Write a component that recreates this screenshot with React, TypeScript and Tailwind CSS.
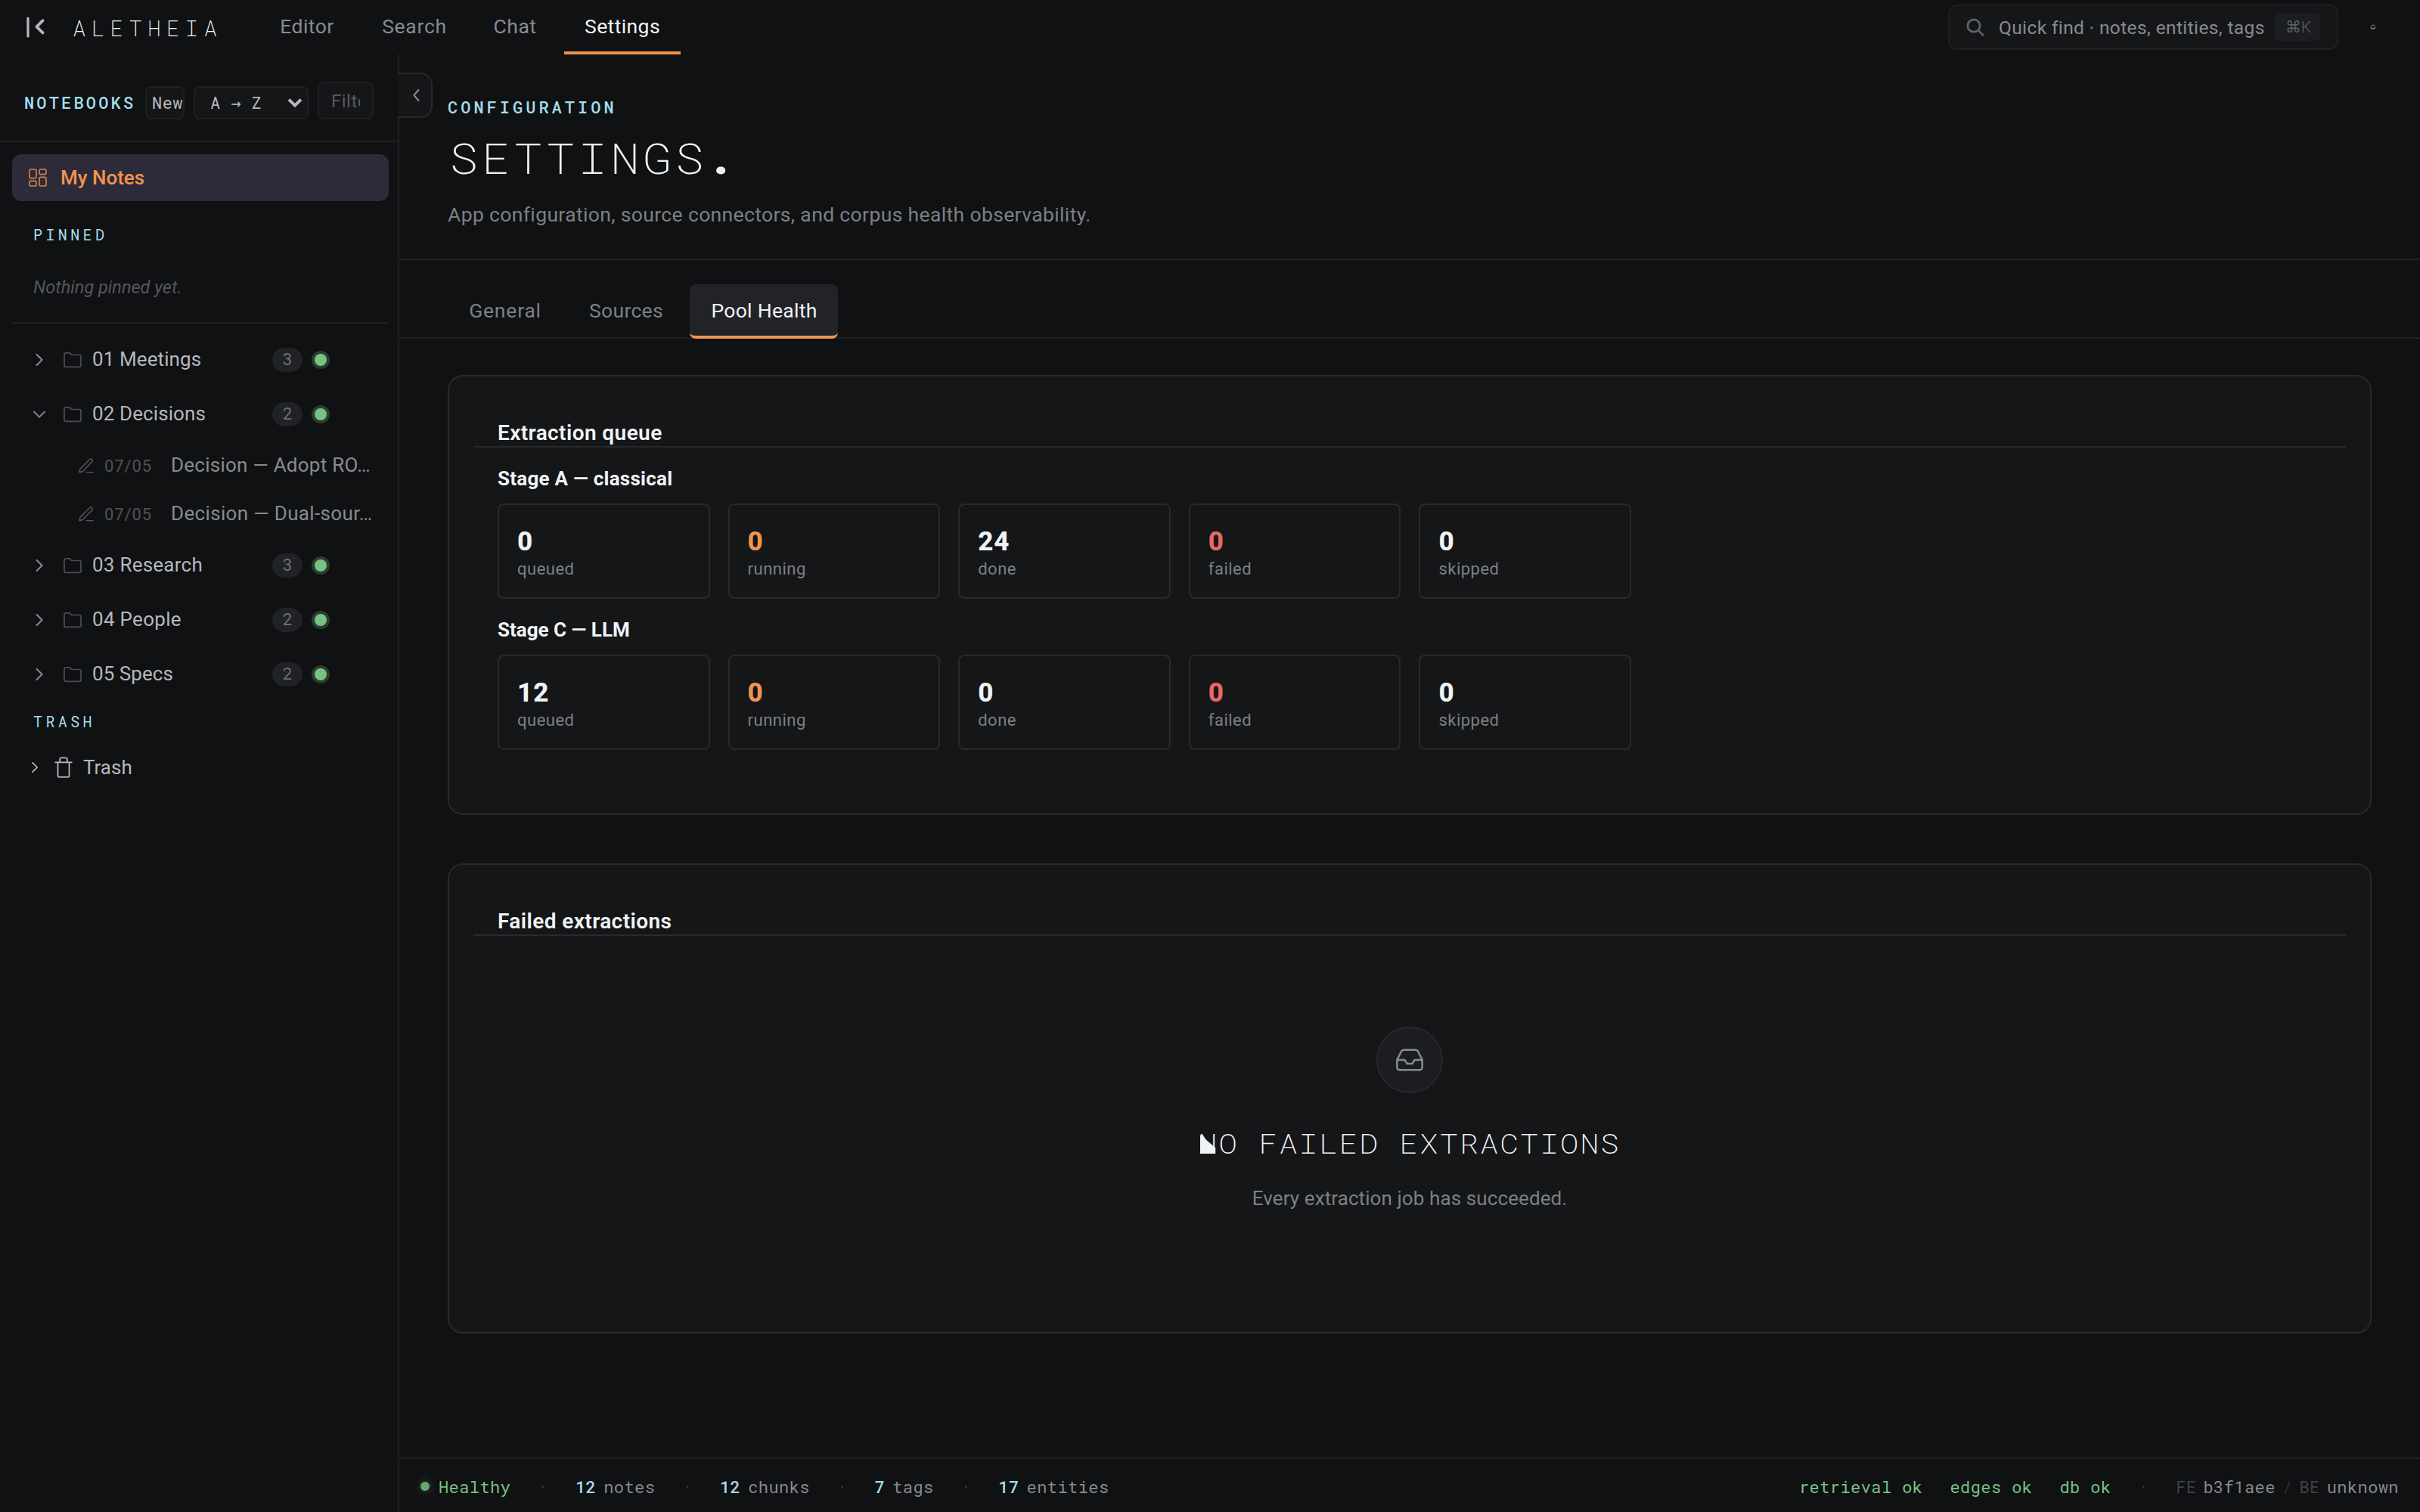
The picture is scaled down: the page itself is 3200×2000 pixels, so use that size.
import React from 'react';

const MONO = "font-['Roboto_Mono','Liberation_Mono',monospace]";

function ChevronRight({ className = '' }: { className?: string }) {
  return (
    <svg viewBox="0 0 16 16" fill="none" stroke="currentColor" strokeWidth="2" strokeLinecap="round" strokeLinejoin="round" className={className}>
      <path d="M4.6 1l7 7-7 7" />
    </svg>
  );
}

function ChevronDown({ className = '' }: { className?: string }) {
  return (
    <svg viewBox="0 0 16 16" fill="none" stroke="currentColor" strokeWidth="2" strokeLinecap="round" strokeLinejoin="round" className={className}>
      <path d="M1 4.6l7 7 7-7" />
    </svg>
  );
}

function FolderIcon() {
  return (
    <svg viewBox="0 0 24 22" fill="none" stroke="currentColor" strokeWidth="1.7" strokeLinejoin="round" className="h-[22px] w-6 shrink-0">
      <path d="M1 3.8C1 2.4 1.8 1.9 3 1.9h5.2l2.2 2.6H21c1.2 0 2 .6 2 1.9v12c0 1.2-.8 1.9-2 1.9H3c-1.2 0-2-.7-2-1.9z" />
    </svg>
  );
}

function PencilIcon() {
  return (
    <svg viewBox="0 0 20 20" fill="none" stroke="currentColor" strokeWidth="1.6" strokeLinecap="round" strokeLinejoin="round" className="h-5 w-5 shrink-0">
      <path d="M1 18.6l.9-4.2L14.6 1.7a2 2 0 0 1 2.9 0l.2.2a2 2 0 0 1 0 2.9L5.2 17.6z" />
      <path d="M10.5 18.8H19" />
    </svg>
  );
}

function TopBar() {
  return (
    <header className="flex h-[72px] shrink-0 items-start">
      <div className="flex h-[72px] w-[344px] items-center">
        <svg viewBox="0 0 32 32" fill="none" stroke="#b4b8be" strokeLinecap="round" strokeLinejoin="round" className="ml-8 h-8 w-8">
          <path strokeWidth="3.2" d="M5 4v24" />
          <path strokeWidth="3.8" d="M24.6 7.2l-8.2 8.1 8.2 8.1" />
        </svg>
        <span className={`${MONO} ml-8 pt-1 text-[29px] font-[200] tracking-[7.4px] text-[#f0f3f6]`}>ALETHEIA</span>
      </div>
      <nav className="flex text-[26.5px] text-[#868b92]">
        <a className="h-[72px] w-[124px] border-b-4 border-transparent text-center leading-[69px] tracking-[0.5px]">Editor</a>
        <a className="ml-3 h-[72px] w-[136px] border-b-4 border-transparent text-center leading-[69px] tracking-[0.7px]">Search</a>
        <a className="ml-3 h-[72px] w-[106px] border-b-4 border-transparent text-center leading-[69px] tracking-[0.5px]">Chat</a>
        <a className="ml-3 h-[72px] w-[154px] border-b-4 border-[#f0954f] text-center leading-[69px] tracking-[0.4px] text-[#f0f3f6]">Settings</a>
      </nav>
      <div className="ml-auto mr-[108px] mt-[6px] flex h-[60px] w-[516px] items-center rounded-xl border-2 border-[#1e2023] bg-[#151618]">
        <svg viewBox="0 0 24 24" fill="none" stroke="#5d6269" strokeWidth="2.8" strokeLinecap="round" className="ml-[22px] h-6 w-6">
          <circle cx="10" cy="10" r="8.2" />
          <path d="M16.4 16.6l5.6 5.8" />
        </svg>
        <span className="ml-[19px] w-[354px] whitespace-nowrap pt-[3px] text-[24.5px] tracking-[0.38px] text-[#868b92]">Quick find · notes, entities, tags</span>
        <kbd className="ml-[11px] h-9 w-[60px] rounded-md bg-[#1b1d21] pl-[2px] text-center font-['Roboto'] text-[21px] font-light leading-[37px] text-[#5b6067]">⌘K</kbd>
      </div>
      <div className="-ml-[66px] mr-[58px] mt-8 h-2 w-2">
        <svg viewBox="0 0 8 8" fill="none" stroke="#7b8087" strokeWidth="1" className="h-2 w-2">
          <path d="M1.3 5.4V3.6a2.6 2.6 0 0 1 5.2 0v1.8zM.8 5.5h6.3M3 6.8h1.8" />
        </svg>
      </div>
    </header>
  );
}

function FolderRow({ name, count, open, tracking }: { name: string; count: number; open?: boolean; tracking: string }) {
  return (
    <div className="flex h-[72px] items-center pl-7">
      {open ? <ChevronDown className="h-4 w-4 text-[#868b92]" /> : <ChevronRight className="h-4 w-4 text-[#868b92]" />}
      <span className="ml-6 flex text-[#4a4e54]"><FolderIcon /></span>
      <span className={`ml-[14px] w-[238px] pb-[2px] text-[26px] text-[#b4b8be] ${tracking}`}>{name}</span>
      <span className="h-8 w-10 rounded-full bg-[#202226] text-center text-[22px] leading-8 text-[#6d7178]">{count}</span>
      <span className="ml-4 h-4 w-4 rounded-full bg-[#78c283] shadow-[0_0_0_4px_rgba(120,194,131,0.25)]" />
    </div>
  );
}

function NoteRow({ title, tracking }: { title: string; tracking: string }) {
  return (
    <div className="flex h-16 items-center pl-[88px]">
      <span className="flex text-[#4f5359]"><PencilIcon /></span>
      <span className="ml-[14px] w-[88px] pt-[1px] text-[22px] tracking-[0.9px] text-[#4f5359]">07/05</span>
      <span className={`whitespace-nowrap pb-[2px] text-[26px] text-[#868b92] ${tracking}`}>{title}</span>
    </div>
  );
}

function Sidebar() {
  return (
    <aside className="flex w-[528px] shrink-0 flex-col border-r-2 border-[#1e2023]">
      <div className="flex h-[116px] items-end border-b-2 border-[#1e2023] pb-7 pl-8">
        <h2 className={`${MONO} w-[160px] whitespace-nowrap text-[22px] font-medium leading-[44px] tracking-[3.16px] text-[#a5dcea]`}>NOTEBOOKS</h2>
        <button className={`${MONO} h-11 w-[52px] overflow-hidden rounded-lg border-2 border-[#1e2023] bg-[#151618] pl-[7px] text-left text-[22px] leading-10 tracking-[0.44px] text-[#b4b8be]`}>New</button>
        <div className={`${MONO} ml-3 flex h-11 w-[152px] items-center justify-between rounded-lg border-2 border-[#1e2023] bg-[#151618] pl-5 pr-[6px] text-[22px] leading-10 tracking-[0.44px] text-[#b4b8be]`}>
          <span className="whitespace-pre">A <span className="font-['DejaVu_Sans_Mono']">→</span> Z</span>
          <svg viewBox="0 0 20 14" fill="none" stroke="currentColor" strokeWidth="4" className="h-[14px] w-5">
            <path d="M2 2.6l8 7.8 8-7.8" />
          </svg>
        </div>
        <div className="ml-3 flex h-[50px] w-[74px] items-center rounded-lg border-2 border-[#1e2023] bg-[#151618] px-4 text-[24px] text-[#55595f]">
          <span className="w-[38px] overflow-hidden whitespace-nowrap pt-[1px] tracking-[0.5px]">Filter</span>
        </div>
      </div>

      <div className="flex flex-col pl-4 pr-3 pt-4">
        <div className="flex h-[62px] items-center rounded-xl bg-[#2d2a3a] pl-[22px] text-[#f0954f]">
          <svg viewBox="0 0 24 24" fill="none" stroke="currentColor" strokeWidth="1.6" className="h-6 w-6 opacity-85">
            <rect x="1" y="1" width="9" height="11.6" rx="1.8" />
            <rect x="14" y="1" width="9" height="6.6" rx="1.8" />
            <rect x="1" y="16.4" width="9" height="6.6" rx="1.8" />
            <rect x="14" y="11.4" width="9" height="11.6" rx="1.8" />
          </svg>
          <span className="ml-[18px] text-[26px] font-medium">My Notes</span>
        </div>
        <h3 className={`${MONO} h-[90px] pl-7 text-[20px] leading-[89px] tracking-[4.4px] text-[#a5dcea]`}>PINNED</h3>
        <p className="h-12 pl-7 text-[23.5px] italic leading-[48px] text-[#53575d]">Nothing pinned yet.</p>
        <div className="mb-3 mt-[22px] h-[2px] bg-[#1e2023]" />
        <FolderRow name="01 Meetings" count={3} tracking="tracking-[0.1px]" />
        <FolderRow name="02 Decisions" count={2} open tracking="tracking-[0.1px]" />
        <NoteRow title="Decision — Adopt RO…" tracking="tracking-[0.25px]" />
        <NoteRow title="Decision — Dual-sour…" tracking="tracking-[0.35px]" />
        <FolderRow name="03 Research" count={3} tracking="tracking-[0.24px]" />
        <FolderRow name="04 People" count={2} tracking="tracking-[0.3px]" />
        <FolderRow name="05 Specs" count={2} tracking="tracking-[0.06px]" />
        <h3 className={`${MONO} h-[54px] pl-7 text-[20px] leading-[53px] tracking-[4.4px] text-[#a5dcea]`}>TRASH</h3>
        <div className="flex h-[66px] items-center pl-[23px] text-[#b4b8be]">
          <ChevronRight className="h-[14px] w-[14px]" />
          <svg viewBox="0 0 24 28" fill="none" stroke="currentColor" strokeWidth="1.8" strokeLinecap="round" strokeLinejoin="round" className="ml-[19px] h-7 w-6">
            <path d="M1.2 7.4h21.6M4.5 7.4V25c0 1.2.7 1.9 1.9 1.9h11.2c1.2 0 1.9-.7 1.9-1.9V7.4M7.2 7V3.2c0-1.2.7-1.9 1.9-1.9h5.8c1.2 0 1.9.7 1.9 1.9V7" />
          </svg>
          <span className="ml-[14px] text-[26px]">Trash</span>
        </div>
      </div>
    </aside>
  );
}

type Stat = { value: number; label: string; color: string };

function StatGrid({ stats }: { stats: Stat[] }) {
  return (
    <div className="grid w-[1499px] grid-cols-5 gap-6">
      {stats.map((s) => (
        <div key={s.label} className="h-[126px] rounded-lg border-2 border-[#27292c] pl-6">
          <div className={`mt-[27px] text-[35px] font-[800] leading-[44px] tracking-[1px] ${s.color}`}>{s.value}</div>
          <div className="text-[22px] leading-[28px] tracking-[0.5px] text-[#7b8087]">{s.label}</div>
        </div>
      ))}
    </div>
  );
}

const WHITE = 'text-[#f0f3f6]';

const STAGE_A: Stat[] = [
  { value: 0, label: 'queued', color: WHITE },
  { value: 0, label: 'running', color: 'text-[#f0954f]' },
  { value: 24, label: 'done', color: WHITE },
  { value: 0, label: 'failed', color: 'text-[#e66a65]' },
  { value: 0, label: 'skipped', color: WHITE },
];

const STAGE_C: Stat[] = [
  { value: 12, label: 'queued', color: WHITE },
  { value: 0, label: 'running', color: 'text-[#f0954f]' },
  { value: 0, label: 'done', color: WHITE },
  { value: 0, label: 'failed', color: 'text-[#e66a65]' },
  { value: 0, label: 'skipped', color: WHITE },
];

function CardTitle({ children }: { children: React.ReactNode }) {
  return (
    <h2 className="mx-8 mt-[52px] h-[42px] border-b-2 border-[#27292c] pl-8 text-[28px] font-semibold leading-[46px] tracking-[0.42px] text-[#f0f3f6]">
      {children}
    </h2>
  );
}

function Main() {
  return (
    <main className="flex min-w-0 flex-1 flex-col">
      <div className="flex h-[272px] border-b-2 border-[#1e2023]">
        <button className="-ml-[2px] mt-6 flex h-[60px] w-[46px] items-center rounded-r-2xl border-2 border-l-0 border-[#27292c] bg-[#151618] pl-[17px] text-[#868b92]">
          <svg viewBox="0 0 16 16" fill="none" stroke="currentColor" strokeWidth="2" strokeLinecap="round" strokeLinejoin="round" className="h-4 w-4">
            <path d="M10.4 1l-6 7 6 7" />
          </svg>
        </button>
        <div className="pl-5">
          <p className={`${MONO} mt-[56px] text-[22px] font-medium leading-[28px] tracking-[4px] text-[#a5dcea]`}>CONFIGURATION</p>
          <h1 className={`${MONO} ml-[2px] mt-[16px] w-fit origin-left scale-x-[1.14] text-[56px] font-[200] leading-[72px] tracking-[3.8px] text-[#f0f3f6]`}>
            SETTINGS<span className="-ml-[1px] font-bold">.</span>
          </h1>
          <p className="mt-[22px] whitespace-nowrap text-[26.5px] leading-[36px] tracking-[0.36px] text-[#7b8087]">
            App configuration, source connectors, and corpus health observability.
          </p>
        </div>
      </div>

      <div className="flex h-[104px] items-end gap-2 border-b-2 border-[#1e2023] pl-16 text-[26.5px] text-[#7b8087]">
        <a className="-mb-[2px] h-[72px] w-[152px] border-b-4 border-transparent text-center leading-[69px] tracking-[0.8px]">General</a>
        <a className="-mb-[2px] h-[72px] w-[152px] border-b-4 border-transparent text-center leading-[69px] tracking-[0.3px]">Sources</a>
        <a className="-mb-[2px] h-[72px] w-[196px] rounded-lg border-b-4 border-[#f0954f] bg-[#212327] pl-[1px] text-center leading-[69px] tracking-[0.3px] text-[#f0f3f6]">Pool Health</a>
      </div>

      <div className="flex min-h-0 flex-1 flex-col gap-16 pl-16 pr-16 pt-12">
        <section className="h-[582px] shrink-0 rounded-[20px] border-2 border-[#27292c] bg-[#151618]">
          <CardTitle>Extraction queue</CardTitle>
          <div className="pl-16">
            <h3 className="mt-[21px] text-[26px] font-bold leading-[40px] tracking-[0.25px] text-[#f0f3f6]">Stage A — classical</h3>
            <div className="mt-[13px]"><StatGrid stats={STAGE_A} /></div>
            <h3 className="mt-[21px] text-[26px] font-bold leading-[40px] text-[#f0f3f6]">Stage C — LLM</h3>
            <div className="mt-[13px]"><StatGrid stats={STAGE_C} /></div>
          </div>
        </section>

        <section className="h-[622px] shrink-0 rounded-[20px] border-2 border-[#27292c] bg-[#151618]">
          <CardTitle>Failed extractions</CardTitle>
          <div className="mt-[120px] flex flex-col items-center">
            <div className="flex h-[88px] w-[88px] items-center justify-center rounded-full border-2 border-[#27292c] bg-[#1b1d21]">
              <svg viewBox="0 0 24 24" fill="none" stroke="#868b92" strokeWidth="1.5" strokeLinecap="round" strokeLinejoin="round" className="h-10 w-10">
                <path d="M22 12h-6l-2 3h-4l-2-3H2" />
                <path d="M5.45 5.11 2 12v6a2 2 0 0 0 2 2h16a2 2 0 0 0 2-2v-6l-3.45-6.89A2 2 0 0 0 16.76 4H7.24a2 2 0 0 0-1.79 1.11z" />
              </svg>
            </div>
            <div className="relative mt-[42px] scale-x-[1.15]">
              <h2 className={`${MONO} whitespace-nowrap text-[36px] font-[200] leading-[48px] tracking-[1.5px] text-[#f0f3f6]`}>NO FAILED EXTRACTIONS</h2>
              {/* solid wedge under the diagonal of the first letter */}
              <span className="absolute left-[2px] top-[13px] h-[25px] w-[18px] bg-[#f0f3f6] [clip-path:polygon(0_0,100%_70%,100%_100%,0_100%)]" />
            </div>
            <p className="mt-[31px] text-[26px] leading-[36px] tracking-[0.1px] text-[#7b8087]">Every extraction job has succeeded.</p>
          </div>
        </section>
      </div>

      <StatusBar />
    </main>
  );
}

function Sep() {
  return <span className="mx-9 text-[#3a3d42]">·</span>;
}

function Count({ n, label }: { n: number; label: string }) {
  return (
    <>
      <span className="font-medium text-[#a5dcea]">{n}</span>
      <span className="ml-[10px]">{label}</span>
    </>
  );
}

function StatusBar() {
  return (
    <footer className={`${MONO} flex h-[72px] shrink-0 items-center border-t-2 border-[#1e2023] pl-7 pr-7 pt-[2px] text-[22px] tracking-[0.42px] text-[#868b92]`}>
      <span className="mr-3 h-3 w-3 rounded-full bg-[#66a772] shadow-[0_0_12px_rgba(120,194,131,0.4)]" />
      <span className="text-[#78c283]">Healthy</span>
      <Sep />
      <Count n={12} label="notes" />
      <Sep />
      <Count n={12} label="chunks" />
      <Sep />
      <Count n={7} label="tags" />
      <Sep />
      <Count n={17} label="entities" />
      <span className="ml-auto text-[#78c283]">retrieval ok</span>
      <span className="ml-9 text-[#78c283]">edges ok</span>
      <span className="ml-9 text-[#78c283]">db ok</span>
      <Sep />
      <span className="text-[#3f4247]">FE</span>
      <span className="ml-[9px]">b3f1aee</span>
      <span className="ml-[9px] text-[#2b2e32]">/</span>
      <span className="ml-[9px] text-[#3f4247]">BE</span>
      <span className="ml-[9px]">unknown</span>
    </footer>
  );
}

export default function App() {
  return (
    <div className="flex h-[2000px] w-[3200px] flex-col overflow-hidden bg-[#101113] font-['Roboto','Liberation_Sans',sans-serif]">
      <TopBar />
      <div className="flex min-h-0 flex-1">
        <Sidebar />
        <Main />
      </div>
    </div>
  );
}
